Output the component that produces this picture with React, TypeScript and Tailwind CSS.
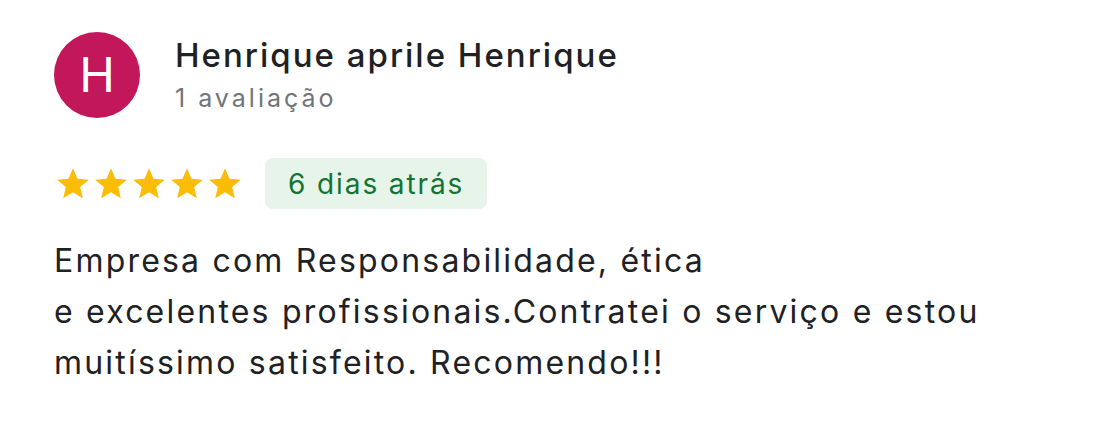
import React from "react";

const Star = () => (
  <svg className="h-[38px] w-[38px]" viewBox="0 0 24 24" aria-hidden="true">
    <path
      fill="#fbbc04"
      d="M12 17.27 18.18 21l-1.64-7.03L22 9.24l-7.19-.61L12 2 9.19 8.63 2 9.24l5.46 4.73L5.82 21z"
    />
  </svg>
);

export default function App() {
  return (
    <div className="min-h-[440px] w-[1118px] bg-white font-['Inter',sans-serif]">
      <div className="px-[54px] pt-[32px]">
        <div className="flex items-center gap-[35px]">
          <div className="flex h-[86px] w-[86px] shrink-0 items-center justify-center rounded-full bg-[#c2185b] text-[48px] leading-none text-white">
            H
          </div>
          <div className="flex flex-col -mt-[1px]">
            <span className="text-[33px] font-medium leading-[40px] tracking-[2px] text-[#202124]">
              Henrique aprile Henrique
            </span>
            <span className="mt-[6px] text-[25px] leading-[34px] tracking-[3px] text-[#70757a]">1 avaliação</span>
          </div>
        </div>

        <div className="mt-[40px] flex items-center gap-[21px]">
          <div className="flex items-center">
            <Star />
            <Star />
            <Star />
            <Star />
            <Star />
          </div>
          <span className="flex h-[51px] items-center rounded-[8px] bg-[#e6f4ea] px-[23px] text-[28px] tracking-[1.9px] text-[#137333]">
            6 dias atrás
          </span>
        </div>

        <p className="mt-[26px] text-[32px] leading-[51px] tracking-[2.2px] text-[#202124]">
          Empresa com Responsabilidade, ética
          <br />
          e excelentes profissionais.Contratei o serviço e estou
          <br />
          muitíssimo satisfeito. Recomendo!!!
        </p>
      </div>
    </div>
  );
}
